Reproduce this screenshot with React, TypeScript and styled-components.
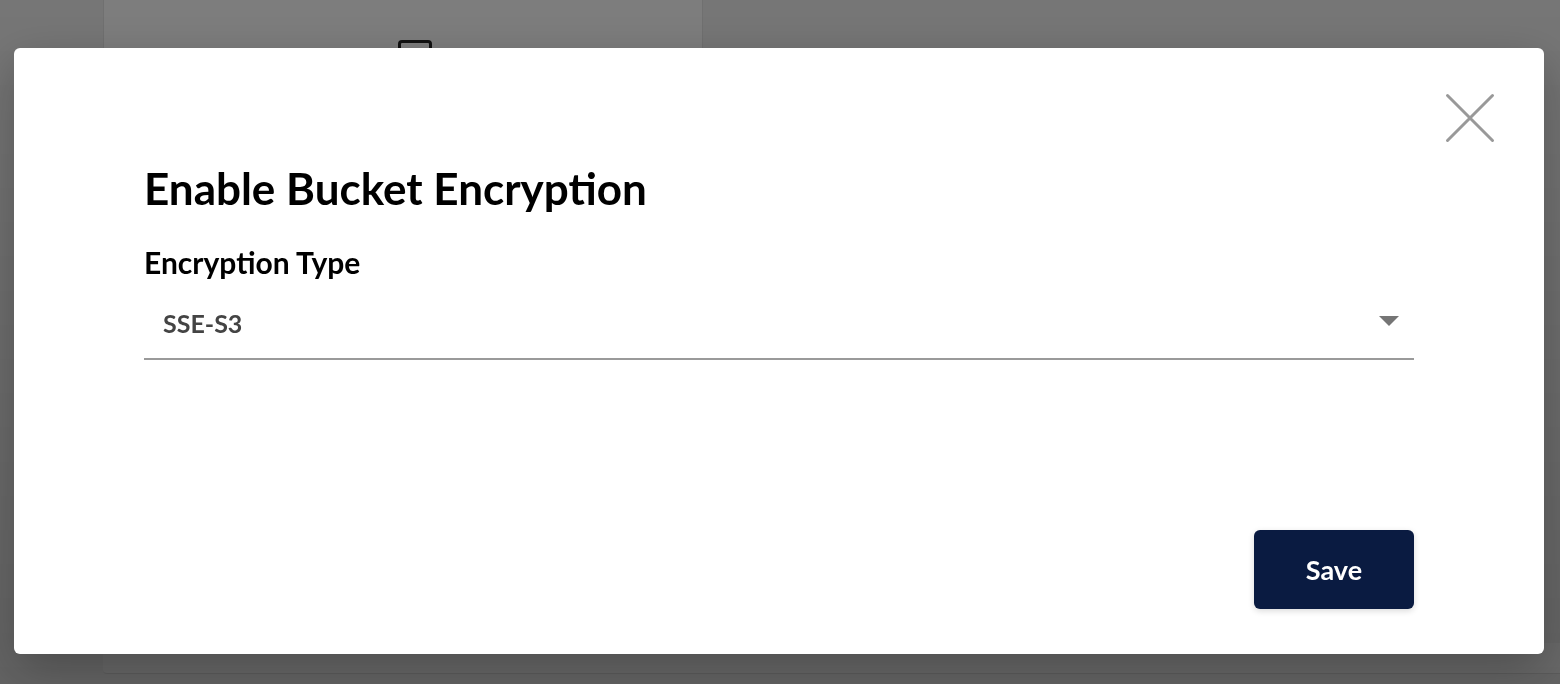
import React, { useState } from "react";
import styled, { createGlobalStyle } from "styled-components";

const GlobalStyle = createGlobalStyle`
  html, body {
    margin: 0;
    padding: 0;
    height: 100%;
    overflow: hidden;
  }
  body {
    font-family: Lato, "Open Sans", "Liberation Sans", sans-serif;
    background: #ececec;
  }
`;

const Page = styled.div`
  width: 1560px;
  height: 684px;
  display: flex;
  flex-direction: column;
  justify-content: space-between;
  padding-left: 103px;
  box-sizing: border-box;
`;

const TopCard = styled.div`
  width: 600px;
  height: 120px;
  background: #fafafa;
  border-left: 1px solid #e0e0e0;
  border-right: 1px solid #e0e0e0;
  display: flex;
  align-items: flex-start;
  padding: 40px 0 0 109px;
  box-sizing: border-box;
`;

const TopLabel = styled.span`
  flex: 0 0 185px;
  font-size: 22px;
  font-weight: 700;
  color: #333;
  margin-top: 5px;
`;

const TopBox = styled.span`
  width: 28px;
  height: 30px;
  border: 3px solid #222;
  border-radius: 4px;
`;

const BottomCard = styled.div`
  height: 30px;
  margin-bottom: 10px;
  background: #f4f4f4;
  border-radius: 4px 0 0 4px;
  border-bottom: 1px solid #d8d8d8;
`;

const Backdrop = styled.div`
  position: fixed;
  inset: 0;
  background: linear-gradient(180deg, rgba(0, 0, 0, 0.5) 0%, rgba(0, 0, 0, 0.58) 100%);
`;

const Modal = styled.div`
  position: fixed;
  left: 14px;
  top: 48px;
  width: 1530px;
  height: 606px;
  background: #fff;
  border-radius: 6px;
  box-shadow: 0 16px 48px rgba(0, 0, 0, 0.25);
  display: flex;
  flex-direction: column;
  box-sizing: border-box;
  padding: 0 130px 45px;
`;

const Header = styled.div`
  display: flex;
  justify-content: flex-end;
  margin-right: -85px;
  padding-top: 41px;
`;

const CloseButton = styled.button`
  width: 58px;
  height: 58px;
  border: none;
  background: transparent;
  padding: 0;
  cursor: pointer;
  display: flex;
  align-items: center;
  justify-content: center;
`;

const Title = styled.h2`
  margin: 15px 0 0;
  font-size: 44px;
  line-height: 52px;
  font-weight: 700;
  color: #000;
`;

const FieldLabel = styled.label`
  display: block;
  margin-top: 30px;
  font-size: 30px;
  line-height: 36px;
  font-weight: 700;
  color: #000;
`;

const Select = styled.div`
  display: flex;
  align-items: center;
  justify-content: space-between;
  height: 80px;
  box-sizing: border-box;
  padding: 8px 15px 0 19px;
  border-bottom: 2px solid #9a9a9a;
  cursor: pointer;
`;

const SelectValue = styled.span`
  font-size: 25px;
  font-weight: 700;
  color: #444;
`;

const Caret = styled.span`
  width: 0;
  height: 0;
  border-left: 10px solid transparent;
  border-right: 10px solid transparent;
  border-top: 10px solid #757575;
  margin-top: -4px;
`;

const Actions = styled.div`
  margin-top: auto;
  display: flex;
  justify-content: flex-end;
`;

const SaveButton = styled.button`
  width: 160px;
  height: 79px;
  border: none;
  border-radius: 6px;
  background: #0a1b41;
  color: #fff;
  font-family: inherit;
  font-size: 27px;
  font-weight: 700;
  cursor: pointer;
  box-shadow: 0 2px 6px rgba(0, 0, 0, 0.15);
`;

const CloseIcon = () => (
  <svg width="58" height="58" viewBox="0 0 58 58">
    <path
      d="M6.5 6.5 L51.5 51.5 M51.5 6.5 L6.5 51.5"
      stroke="#999"
      strokeWidth="3"
      strokeLinecap="round"
    />
  </svg>
);

export default function App() {
  const [value] = useState("SSE-S3");
  return (
    <>
      <GlobalStyle />
      <Page>
        <TopCard>
          <TopLabel>Encryption</TopLabel>
          <TopBox />
        </TopCard>
        <BottomCard />
      </Page>
      <Backdrop />
      <Modal>
        <Header>
          <CloseButton aria-label="Close">
            <CloseIcon />
          </CloseButton>
        </Header>
        <Title>Enable Bucket Encryption</Title>
        <FieldLabel>Encryption Type</FieldLabel>
        <Select>
          <SelectValue>{value}</SelectValue>
          <Caret />
        </Select>
        <Actions>
          <SaveButton>Save</SaveButton>
        </Actions>
      </Modal>
    </>
  );
}
